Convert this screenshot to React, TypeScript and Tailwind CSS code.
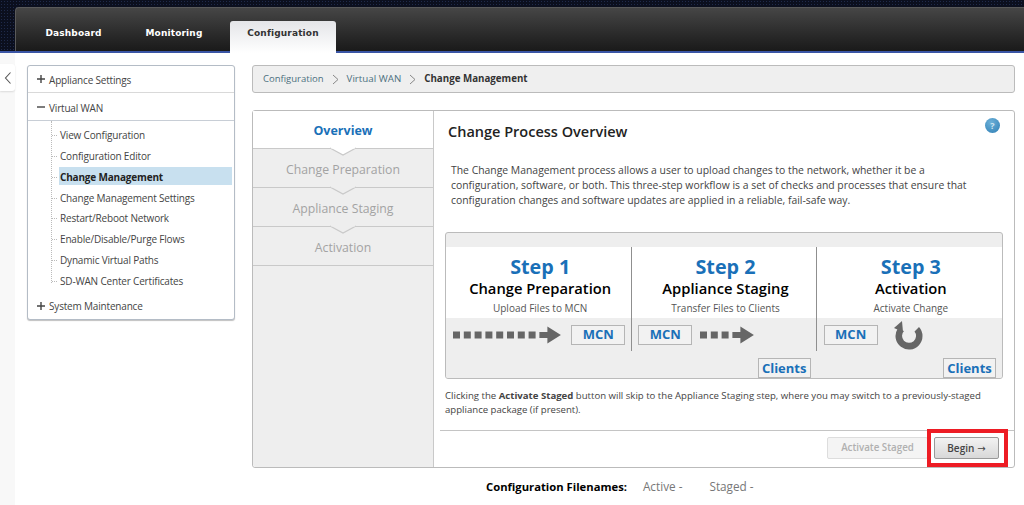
import React from "react";

const font = "font-['Open_Sans','Noto_Sans',sans-serif]";

function Notch({ white }: { white?: boolean }) {
  const fill = white ? "#ffffff" : "#eeeeee";
  return (
    <svg className="absolute left-[76px] top-[-2px] z-10" width="28" height="10" viewBox="0 0 28 10">
      <path d="M1 1 L14 8 L27 1" fill={fill} stroke="#c9c9c9" strokeWidth="1.2" />
      <rect x="2" y="0" width="24" height="1.5" fill={fill} />
    </svg>
  );
}

function Step({ label, notch }: { label: string; notch?: boolean }) {
  return (
    <div className="relative h-[39px] border-b border-[#c9c9c9] text-center text-[12.25px] leading-[42px] text-[#a3a3a3]">
      <Notch white={notch === false} />
      {label}
    </div>
  );
}

function Node({ label }: { label: string }) {
  return (
    <div className="flex h-[20px] w-[54px] shrink-0 items-center justify-center border border-[#b5b5b5] bg-[#f2f2f2] text-[13px] font-bold text-[#1a70b8]">
      {label}
    </div>
  );
}

function Dots({ n }: { n: number }) {
  const end = n * 10.8;
  return (
    <svg className="shrink-0" width={end + 22} height="18" viewBox={`0 0 ${end + 22} 18`}>
      {Array.from({ length: n }).map((_, i) => (
        <rect key={i} x={i * 10.8} y="5.5" width="7" height="7" fill="#666" />
      ))}
      <path d={`M${end} 6 h8 v-5.5 l13.5 8.5 l-13.5 8.5 v-5.5 h-8 z`} fill="#666" />
    </svg>
  );
}

function Col({ step, title, sub, divider, children, clients }: { step: string; title: string; sub: string; divider?: string; children: React.ReactNode; clients?: boolean }) {
  return (
    <div className="relative flex w-[186px] flex-col">
      <div className="flex h-[71px] flex-col items-center bg-white pl-[3px] pt-[7px]">
        <div className="text-[19.75px] font-bold leading-[25px] text-[#1a70b8]">{step}</div>
        <div className="text-[14.75px] font-semibold leading-[19px] text-black">{title}</div>
        <div className="mt-[3px] text-[10px] leading-[14px] text-[#555]">{sub}</div>
      </div>
      <div className="flex h-[60px] flex-col bg-[#eeeeee]">
        <div className="flex h-[26px] items-center pt-[8px]">{children}</div>
        {clients && (
          <div className="mt-auto flex justify-end pr-[6px]">
            <div className="flex h-[20px] w-[53px] items-center justify-center border border-[#b5b5b5] bg-[#f2f2f2] pt-[1px] text-[13px] font-bold text-[#1a70b8]">Clients</div>
          </div>
        )}
      </div>
      {divider && <div className={`absolute top-0 z-10 h-[104px] w-[1px] bg-[#8f8f8f] ${divider}`} />}
    </div>
  );
}

function Plus() {
  return (
    <svg className="mr-[3px] shrink-0" width="10" height="10" viewBox="0 0 10 10"><path d="M5 1 V9 M1 5 H9" stroke="#444" strokeWidth="1.4" /></svg>
  );
}

function Minus() {
  return (
    <svg className="mr-[3px] shrink-0" width="10" height="10" viewBox="0 0 10 10"><path d="M1 5 H9" stroke="#444" strokeWidth="1.4" /></svg>
  );
}

function Chev() {
  return (
    <svg width="7" height="11" viewBox="0 0 7 11"><path d="M1 1 L6 5.5 L1 10" fill="none" stroke="#888" strokeWidth="1" /></svg>
  );
}

export default function App() {
  const items = ["View Configuration", "Configuration Editor", "Change Management", "Change Management Settings", "Restart/Reboot Network", "Enable/Disable/Purge Flows", "Dynamic Virtual Paths", "SD-WAN Center Certificates"];
  return (
    <div className={`${font} h-[505px] w-[1024px] overflow-hidden bg-white text-[#444]`}>
      {/* header */}
      <div className="h-[53px] border-b-[2px] border-[#3a55a5] bg-[#0b0f1e] bg-[radial-gradient(#1f2a4a_1px,transparent_1px)] bg-[length:3px_3px] pl-[15px] pt-[7px]">
        <div className="flex h-[44px] rounded-tl-[4px] border-l border-t border-[#5a5a5a] bg-gradient-to-b from-[#464646] to-[#1a1a1a] pl-[5px] pt-[13px] font-['DejaVu_Sans',sans-serif] text-[9px] font-bold tracking-[0.15px] text-white">
          <div className="w-[105px] pt-[6px] text-center">Dashboard</div>
          <div className="w-[96px] pt-[6px] text-center">Monitoring</div>
          <div className="ml-[8px] h-[32px] w-[106px] rounded-t-[3px] bg-gradient-to-b from-[#e4e5e8] to-white pt-[6px] text-center text-[#333]">Configuration</div>
        </div>
      </div>
      <div className="flex h-[452px]">
        {/* rail */}
        <div className="w-[15px] bg-[#f8f8f8] pt-[11px]">
          <div className="flex h-[27px] w-[15px] items-center justify-center rounded-r-[3px] bg-white shadow-[0_1px_2px_rgba(0,0,0,0.12)]">
            <svg width="8" height="14" viewBox="0 0 8 14"><path d="M6.5 1.5 L1.5 7 L6.5 12.5" fill="none" stroke="#555" strokeWidth="1.1" /></svg>
          </div>
        </div>
        {/* sidebar */}
        <div className="ml-[12px] mt-[12px] h-[255px] w-[208px] rounded-[3px] border border-[#b4bcc6] bg-white text-[10px] tracking-[-0.18px] shadow-[0_1px_1px_rgba(0,0,0,0.25)]">
          <div className="flex h-[27px] items-center border-b border-[#d9d9d9] pl-[8px]">
            <Plus /><span className="mt-[2px]">Appliance Settings</span>
          </div>
          <div className="flex h-[28px] items-center border-b border-[#c8ced6] pl-[8px]">
            <Minus /><span className="mt-[3px]">Virtual WAN</span>
          </div>
          <div className="relative ml-[23px] h-[172px] pr-[2px] pt-[4px]">
            <div className="absolute left-0 top-0 h-[162px] border-l border-dotted border-[#bbb]" />
            {items.map((t) => (
              <div key={t} className="relative h-[20.86px] pl-[8px]">
                <div className="absolute left-[1px] top-[10px] w-[5px] border-t border-dotted border-[#bbb]" />
                <div className={`h-[18px] pl-[1px] leading-[20px] ${t === "Change Management" ? "bg-[#c8e0ef] font-bold text-[#222]" : ""}`}>{t}</div>
              </div>
            ))}
          </div>
          <div className="flex h-[22px] items-center pl-[8px] pt-[4px]">
            <Plus /><span>System Maintenance</span>
          </div>
        </div>
        {/* main */}
        <div className="ml-[17px] mt-[12px] w-[763px]">
          <div className="flex h-[28px] items-center gap-[8px] rounded-[3px] border border-[#bbbbbb] bg-[#efefef] pl-[10px] pt-[1px] text-[9.5px] text-[#4d6f80]">
            <span>Configuration</span>
            <Chev />
            <span className="text-[9.75px]">Virtual WAN</span>
            <Chev />
            <span className="text-[9.75px] font-bold text-[#333]">Change Management</span>
          </div>
          <div className="relative mt-[17px] flex h-[358px] rounded-[3px] border border-[#bbbbbb] bg-white">
            {/* steps */}
            <div className="w-[181px] shrink-0 rounded-l-[3px] border-r border-[#c9c9c9] bg-[#eeeeee]">
              <div className="relative h-[38px] border-b border-[#c9c9c9] bg-white text-center text-[12.5px] font-bold leading-[40px] text-[#1a70b8]">
                Overview
              </div>
              <Step label="Change Preparation" notch={false} />
              <Step label="Appliance Staging" notch />
              <Step label="Activation" notch />
            </div>
            {/* content */}
            <div className="relative min-w-0 flex-1">
              <div className="pl-[14px] pt-[12px] text-[14.5px] font-semibold leading-[18px] text-[#222]">Change Process Overview</div>
              <div className="absolute right-[14px] top-[7px] flex h-[15px] w-[15px] items-center justify-center rounded-full bg-[radial-gradient(circle_at_40%_30%,#6cb0d8,#2f7fb5)] text-[9px] font-bold text-[#cfe4f0]">?</div>
              <p className="ml-[17px] mt-[22px] w-[532px] text-[10.4px] leading-[15px] text-[#444]">
                The Change Management process allows a user to upload changes to the network, whether it be a configuration, software, or both. This three-step workflow is a set of checks and processes that ensure that configuration changes and software updates are applied in a reliable, fail-safe way.
              </p>
              <div className="ml-[11px] mt-[24px] w-[558px] overflow-hidden rounded-[3px] border border-[#bbbbbb] bg-[#eeeeee]">
                <div className="h-[14px]" />
                <div className="flex">
                  <Col step="Step 1" title="Change Preparation" sub="Upload Files to MCN" divider="right-[-1px]">
                    <div className="ml-[7px] flex items-center gap-[10px]">
                      <Dots n={8} />
                      <Node label="MCN" />
                    </div>
                  </Col>
                  <Col step="Step 2" title="Appliance Staging" sub="Transfer Files to Clients" divider="right-0" clients>
                    <div className="ml-[7px] flex items-center gap-[8px]">
                      <Node label="MCN" />
                      <Dots n={3} />
                    </div>
                  </Col>
                  <Col step="Step 3" title="Activation" sub="Activate Change" clients>
                    <div className="ml-[7px] flex items-center">
                      <Node label="MCN" />
                      <svg className="ml-[16px] shrink-0" width="30" height="29" viewBox="0 0 30 29">
                        <path d="M3.5 8 A13.5 13.5 0 1 0 25 6 L20.5 10.5 A7 7 0 1 1 10 10 Z" fill="#666" />
                        <path d="M8 0 L0 7 L9 11 Z" fill="#666" />
                      </svg>
                    </div>
                  </Col>
                </div>
              </div>
              <p className="ml-[11px] mt-[10px] w-[560px] text-[9.6px] leading-[14px] text-[#444]">
                Clicking the <b>Activate Staged</b> button will skip to the Appliance Staging step, where you may switch to a previously-staged appliance package (if present).
              </p>
              <div className="ml-[6px] mt-[13px] flex justify-end gap-[6px] border-t border-[#c4c4c4] pr-[15px] pt-[6px]">
                <div className="flex h-[22px] w-[101px] items-center justify-center rounded-[2px] border border-[#dddddd] bg-[#f4f4f4] text-[9.75px] font-semibold text-[#b0b0b0]">Activate Staged</div>
                <div className="flex h-[22px] w-[65px] items-center justify-center gap-[3px] rounded-[2px] border border-[#999999] bg-gradient-to-b from-[#f2f2f2] to-[#d8d8d8] text-[10px] font-semibold text-[#444]">
                  <span>Begin</span>
                  <span className="font-['DejaVu_Sans',sans-serif] text-[10px] font-normal">→</span>
                </div>
              </div>
              <div className="pointer-events-none absolute left-[493px] top-[318px] h-[38px] w-[81px] border-[4px] border-[#ed1c24]" />
            </div>
          </div>
          <div className="mt-[11px] flex items-baseline leading-[15px]">
            <span className="ml-[234px] text-[11.25px] font-bold text-black">Configuration Filenames:</span>
            <span className="ml-[16px] text-[11.75px] text-[#777]">Active -</span>
            <span className="ml-[27px] text-[11.75px] text-[#777]">Staged -</span>
          </div>
        </div>
      </div>
    </div>
  );
}
